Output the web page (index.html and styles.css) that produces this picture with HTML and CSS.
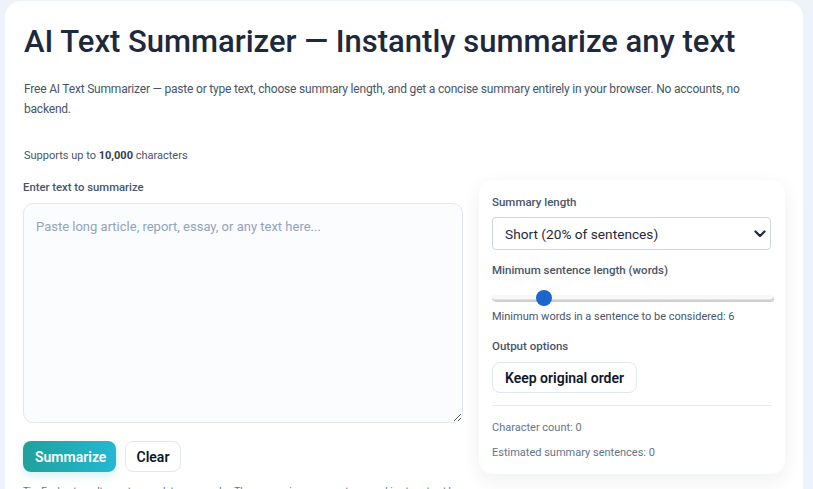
FILE: index.html
```html
<!DOCTYPE html>
<html lang="en">
<head>
<meta charset="utf-8">
<title>AI Text Summarizer</title>
<link rel="stylesheet" href="styles.css">
</head>
<body>
<main class="card">
  <h1 class="title">AI Text Summarizer — Instantly summarize any text</h1>
  <p class="desc">Free AI Text Summarizer — paste or type text, choose summary length, and get a concise summary entirely in your browser. No accounts, no backend.</p>
  <p class="supports">Supports up to <strong>10,000</strong> characters</p>
  <div class="grid">
    <section class="left">
      <label class="label" for="src">Enter text to summarize</label>
      <textarea id="src" class="input" placeholder="Paste long article, report, essay, or any text here..."></textarea>
      <div class="actions">
        <button class="btn btn-primary">Summarize</button>
        <button class="btn btn-ghost">Clear</button>
      </div>
      <p class="tip">Tip: For best results, paste complete paragraphs. The summarizer uses sentence ranking to extract key sentences.</p>
    </section>
    <aside class="panel">
      <div class="field-label">Summary length</div>
      <div class="select-wrap">
        <select class="select">
          <option>Short (20% of sentences)</option>
          <option>Medium (35% of sentences)</option>
          <option>Long (50% of sentences)</option>
        </select>
        <svg class="chev" width="12" height="8" viewBox="0 0 12 8"><path d="M1.5 1.5 L6 6 L10.5 1.5" fill="none" stroke="#1f2937" stroke-width="2.2" stroke-linecap="round" stroke-linejoin="round"/></svg>
      </div>
      <div class="field-label mt">Minimum sentence length (words)</div>
      <input class="range" type="range" min="3" max="21" value="6">
      <div class="help">Minimum words in a sentence to be considered: 6</div>
      <div class="field-label mt2">Output options</div>
      <button class="btn btn-ghost btn-order">Keep original order</button>
      <hr class="divider">
      <div class="stat">Character count: 0</div>
      <div class="stat stat2">Estimated summary sentences: 0</div>
    </aside>
  </div>
</main>
</body>
</html>
```
FILE: styles.css
```css
* { box-sizing: border-box; }
html, body { height: 100%; }
body {
  margin: 0;
  background: #eef2fa;
  font-family: Roboto, "Noto Sans", sans-serif;
  color: #1e293b;
  overflow: hidden;
}
.card {
  margin: 1px 10px 0 5px;
  background: #ffffff;
  border-radius: 16px;
  padding: 22px 18px 0 18px;
  min-height: 600px;
}
.title {
  margin: 0 0 0 1px;
  font-size: 31px;
  line-height: 38px;
  font-weight: 500;
  color: #1e293b;
}
.desc {
  margin: 19px 0 0 1px;
  font-size: 12px;
  line-height: 19.5px;
  color: #475569;
  letter-spacing: -0.2px;
}
.supports {
  margin: 29px 0 0 1px;
  font-size: 11px;
  line-height: 16px;
  color: #475569;
}
.supports strong { color: #334155; font-weight: 700; }
.grid {
  display: grid;
  grid-template-columns: 440px 306px;
  column-gap: 16px;
  margin-top: 16px;
  align-items: start;
}
.label {
  display: block;
  font-size: 11.3px;
  line-height: 16px;
  font-weight: 500;
  color: #475569;
}
.input {
  display: block;
  width: 440px;
  height: 220px;
  margin-top: 7px;
  border: 1px solid #e2e8f0;
  border-radius: 10px;
  background: #fbfcfe;
  padding: 13px 12px;
  font-family: inherit;
  font-size: 13px;
  line-height: 20px;
  color: #1e293b;
  resize: vertical;
}
.input::placeholder { color: #94a3b8; }
.actions {
  display: flex;
  gap: 9px;
  margin-top: 18px;
}
.btn {
  font-family: inherit;
  font-size: 14px;
  font-weight: 600;
  height: 31px;
  border-radius: 8px;
  padding: 0 12px;
  cursor: pointer;
  line-height: 1;
}
.btn-primary {
  border: 0;
  color: #ffffff;
  background: linear-gradient(90deg, #20a19a 0%, #23b8d4 100%);
  width: 93px;
  box-shadow: 0 4px 10px rgba(34, 170, 190, 0.18);
}
.btn-ghost {
  border: 1px solid #e2e8f0;
  background: #ffffff;
  color: #0f172a;
}
.actions .btn-ghost { width: 56px; padding: 0; }
.tip {
  margin: 12px 0 0 0;
  font-size: 10px;
  line-height: 15px;
  color: #64748b;
  letter-spacing: -0.15px;
}
.panel {
  background: #ffffff;
  border-radius: 14px;
  box-shadow: 0 6px 20px rgba(15, 23, 42, 0.07);
  padding: 14px 13px 14px 13px;
  height: 294px;
}
.field-label {
  font-size: 11.5px;
  line-height: 16px;
  color: #475569;
  font-weight: 500;
}
.mt { margin-top: 12px; }
.mt2 { margin-top: 13px; }
.select-wrap {
  position: relative;
  margin-top: 7px;
}
.select {
  appearance: none;
  -webkit-appearance: none;
  display: block;
  width: 279px;
  height: 33px;
  border: 1px solid #cbd5e1;
  border-radius: 4px;
  background: #ffffff;
  font-family: inherit;
  font-size: 13.7px;
  color: #1e293b;
  padding: 0 12px;
}
.chev {
  position: absolute;
  right: 6px;
  top: 13px;
  pointer-events: none;
}
.range {
  -webkit-appearance: none;
  appearance: none;
  display: block;
  width: 281px;
  margin: 12px 0 0 0;
  height: 16px;
  background: transparent;
}
.range::-webkit-slider-runnable-track {
  height: 6px;
  border-radius: 4px;
  background: #f8f8f8;
  box-shadow: inset 0 -1.5px 0 #cfcfcf, 1px 1px 0 #cfcfcf;
}
.range::-webkit-slider-thumb {
  -webkit-appearance: none;
  width: 16px;
  height: 16px;
  border-radius: 50%;
  background: #1a66cc;
  margin-top: -5px;
  border: 0;
}
.help {
  margin-top: 3px;
  font-size: 11px;
  line-height: 16px;
  color: #475569;
}
.btn-order {
  display: block;
  margin-top: 8px;
  width: 145px;
  padding: 0;
}
.divider {
  border: 0;
  border-top: 1px solid #e5eaf1;
  margin: 12px 0 0 0;
}
.stat {
  margin-top: 14px;
  font-size: 11px;
  line-height: 16px;
  color: #64748b;
}
.stat2 { margin-top: 9px; }
```
